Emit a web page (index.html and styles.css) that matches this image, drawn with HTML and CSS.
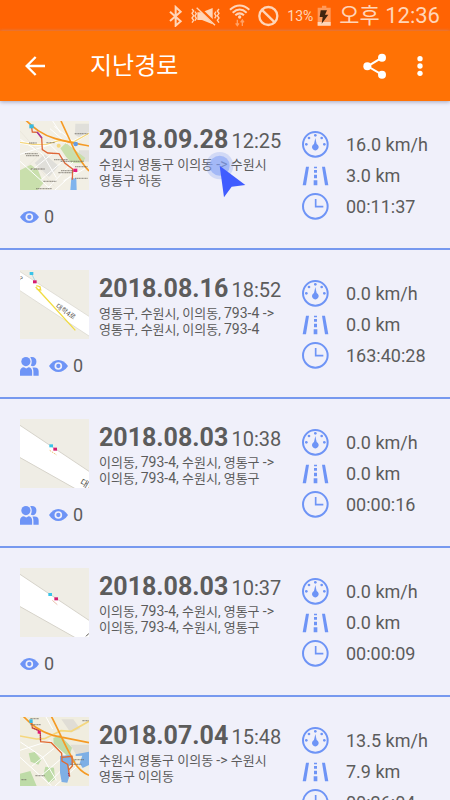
FILE: index.html
```html
<!DOCTYPE html>
<html lang="ko">
<head>
<meta charset="utf-8">
<meta name="viewport" content="width=device-width, initial-scale=1">
<title>지난경로</title>
<link rel="stylesheet" href="styles.css">
</head>
<body>
<svg class="sprite" aria-hidden="true">
  <symbol id="gauge" viewBox="0 0 81 81">
    <circle cx="40" cy="40" r="37" fill="none" stroke="currentColor" stroke-width="6"/>
    <path d="M40 21 L44 39 A10 10 0 1 1 36 39 Z" fill="currentColor"/>
    <g fill="currentColor"><circle cx="40" cy="13" r="4"/><circle cx="21" cy="21" r="4"/><circle cx="59" cy="21" r="4"/><circle cx="13" cy="40" r="4"/><circle cx="67" cy="40" r="4"/></g>
  </symbol>
  <symbol id="road" viewBox="0 0 81 60">
    <path d="M12 2h9L12 58H2zM60 2h9l10 56h-10zM36 2h9v5h-9zM36 12h9v8h-9zM36 26h9v11h-9zM35 43h11v15H35z" fill="currentColor"/>
  </symbol>
  <symbol id="clock" viewBox="0 0 81 81">
    <circle cx="40" cy="40" r="37" fill="none" stroke="currentColor" stroke-width="6"/>
    <path d="M41 18V41H64" fill="none" stroke="currentColor" stroke-width="5"/>
  </symbol>
  <symbol id="eye" viewBox="0 0 57 36">
    <path d="M0 18C8 6 17 0 28 0s21 6 29 18C49 30 39 36 28 36S8 30 0 18z" fill="currentColor"/>
    <circle cx="28" cy="18" r="9" fill="none" stroke="#f0f0fa" stroke-width="5"/>
  </symbol>
  <symbol id="people" viewBox="0 0 58 58">
    <g fill="currentColor">
      <path d="M31 1c12-3 20 4 19 14 0 8-5 13-11 13-2 0-4-1-6-2 4-8 4-18-2-25zM38 32h7c8 0 12 4 12 12v13H41V45c0-5-1-9-3-13z"/>
      <circle cx="18" cy="14" r="14"/>
      <path d="M0 57V44c0-8 5-13 12-13l7 4 7-4c7 0 11 5 11 13v13z"/>
    </g>
  </symbol>
  <symbol id="map-street" viewBox="0 0 207 207">
    <path fill="#efede5" d="M0 0h207v207H0z"/>
    <path d="M-3 17L210 159V234L-3 114z" fill="#fff" stroke="#d6d3ca" stroke-width="3"/>
  </symbol>
  <symbol id="map-city" viewBox="0 0 207 207">
    <path fill="#f2efe5" d="M0 0h207v207H0z"/>
    <path fill="#e0dfda" d="M166 8h41v34l-22 12-20-13zM44 126l30-26 42 35-29 33zM176 88h31v34h-25z"/>
    <path fill="#c9dfac" d="M121 82l17-16 58 45-9 16-33-2-16-18zM0 148l32-17 22 16 16 40-17 20H0z"/>
    <path d="M-3 101L90 71l83 82M1 55l67 45 41 70M35 148l67-54M64 176l70-60M83 202l76-79M105 207l70-63M0 121l95 86M90 23l51 45M103 16l60 48M130 180l76-44M98 0l24 36" fill="none" stroke="#fff" stroke-width="3"/>
    <path d="M0 30l78 88M18 140l39-39M49 132l54 64M142 70l55 73" fill="none" stroke="#ddd9cc" stroke-width="1"/>
    <path d="M0 64l40 6 39 0 38-11 43 4 47-26" fill="none" stroke="#fff" stroke-width="8"/>
    <path d="M0 64l40 6 39 0 38-11 43 4 47-26" fill="none" stroke="#f5d77d" stroke-width="4"/>
    <path d="M18-2C42 21 65 41 106 53c40 11 70 16 101 22M123 0c11 24 24 51 38 82 15 28 30 52 46 68" fill="none" stroke="#f59a24" stroke-width="5"/>
  </symbol>
</svg>

<div class="screen">
  <div class="status">
    <svg width="15" height="22" viewBox="63 12 45 66"><path d="M69 32l32 29-15 13V18l15 14-32 28" fill="none" stroke="currentColor" stroke-width="6"/></svg>
    <svg width="30" height="22" viewBox="130 12 90 66"><path d="M149 34h14l32-13v49l-32-13h-14z" fill="currentColor"/><path d="M149 16l56 55" stroke="#ff6303" stroke-width="10"/><path d="M147 20l55 53M133 24l5 6-5 7 5 7-5 7 5 7-5 7M142 32l4 6-4 7 4 7-4 7M214 24l-5 6 5 7-5 7 5 7-5 7 5 7M205 32l-4 6 4 7-4 7" fill="none" stroke="currentColor" stroke-width="4"/></svg>
    <svg width="21" height="23" viewBox="237 10 63 69"><path d="M240 27q29-25 58 0M248 36q21-19 42 0M256 44q13-12 26 0" fill="none" stroke="currentColor" stroke-width="6"/><circle cx="269" cy="49" r="5" fill="currentColor"/><path d="M262 57v18m-5-7l5 7 5-7M277 76V58m-5 7l5-7 5 7" fill="none" stroke="currentColor" stroke-width="4" opacity=".55"/></svg>
    <svg width="21" height="22" viewBox="328 13 63 66"><circle cx="359" cy="46" r="27" fill="none" stroke="currentColor" stroke-width="7"/><path d="M339 27l40 39" stroke="currentColor" stroke-width="7"/></svg>
    <span class="charge">13%</span>
    <svg width="14" height="21" viewBox="503 14 42 63"><path d="M518 16h13v6h13v54h-39V22h13z" fill="#ff995a"/><path d="M505 65h39v11h-39z" fill="currentColor"/><path d="M514 30h19l-6 13h10l-20 27 3-20h-9z" fill="#41240e"/></svg>
    <span class="time">오후 12:36</span>
  </div>

  <header class="appbar">
    <button class="tool" aria-label="뒤로"><svg width="20" height="20" viewBox="0 0 60 60"><path d="M32 3L5 30l27 27M5 30h55" fill="none" stroke="currentColor" stroke-width="7"/></svg></button>
    <h1>지난경로</h1>
    <button class="tool" aria-label="공유"><svg width="24" height="26" viewBox="0 0 72 78"><path d="M57 14L14 40l43 25" fill="none" stroke="currentColor" stroke-width="6"/><g fill="currentColor"><circle cx="57" cy="14" r="12"/><circle cx="13" cy="40" r="12"/><circle cx="57" cy="65" r="12"/></g></svg></button>
    <button class="tool more" aria-label="더보기"><svg width="6" height="22" viewBox="0 0 18 66"><g fill="currentColor"><circle cx="9" cy="11" r="8"/><circle cx="9" cy="33" r="8"/><circle cx="9" cy="55" r="8"/></g></svg></button>
  </header>

  <main class="routes">
    <article class="route">
      <div class="info">
        <svg class="thumb" viewBox="0 0 207 207">
          <use href="#map-city"/>
          <path d="M154 170l15 3 1 34h-19z" fill="#80b4ed"/>
          <path d="M35 20l2 13 15 1 13 17 2 35 16 10 34 2 18 29 23 17-1 32" fill="none" stroke="#df6737" stroke-width="4"/>
          <path d="M51 33l15 18" stroke="#a133a0" stroke-width="4"/>
          <path class="labels" d="M27 66h23M79 65h26M164 38h39M15 98h38M18 104h39M102 116h42M122 121h69M32 144h42M123 149h38M165 137h38M115 155h42M165 172h38M70 181h39M48 203h48"/>
          <circle cx="116" cy="74" r="6" fill="#f5d77d"/><circle cx="167" cy="69" r="7" fill="#669be2"/>
          <path d="M28 10h13v12H28z" fill="#39bae1"/><path d="M160 143h12v10h-12z" fill="#e21b77"/>
        </svg>
        <div class="place">
          <h2>2018.09.28 <time>12:25</time></h2>
          <p>수원시 영통구 이의동 <span>-&gt;</span> 수원시<br>영통구 하동</p>
        </div>
        <div class="views"><svg class="eye"><use href="#eye"/></svg><span>0</span></div>
      </div>
      <ul class="stats">
        <li><svg class="dial"><use href="#gauge"/></svg>16.0 km/h</li>
        <li><svg class="lane"><use href="#road"/></svg>3.0 km</li>
        <li><svg class="dial"><use href="#clock"/></svg>00:11:37</li>
      </ul>
      <svg class="pointer" viewBox="0 0 120 138" aria-hidden="true"><circle cx="41" cy="41" r="41" fill="#6b8fe8" opacity=".23"/><circle cx="41" cy="41" r="30" fill="#84a2f6" opacity=".6"/><path d="M41 41l77 58-41 5-23 32z" fill="#405cff"/></svg>
    </article>

    <article class="route">
      <div class="info">
        <svg class="thumb" viewBox="0 0 207 207">
          <path fill="#efede5" d="M0 0h207v207H0z"/>
          <path d="M-3 3l213 138v59L-3 60z" fill="#fff" stroke="#d6d3ca" stroke-width="2"/>
          <path d="M47 51l119 130M49 47l11 3 2 10-12-2" fill="none" stroke="#f1dc41" stroke-width="4"/>
          <path d="M35 12l10 20" stroke="#a9d9e4" stroke-width="3"/>
          <path d="M29 6h11v9H29z" fill="#39c4e8"/><path d="M39 31h11v9H39z" fill="#d51b70"/>
          <text class="road-name" transform="translate(106 112) rotate(34)">대학4로</text><text class="road-name" transform="translate(-6 29) rotate(34)">?</text>
        </svg>
        <div class="place">
          <h2>2018.08.16 <time>18:52</time></h2>
          <p>영통구, 수원시, 이의동, <span>793-4 -&gt;</span><br>영통구, 수원시, 이의동, <span>793-4</span></p>
        </div>
        <div class="views"><svg class="people"><use href="#people"/></svg><svg class="eye"><use href="#eye"/></svg><span>0</span></div>
      </div>
      <ul class="stats">
        <li><svg class="dial"><use href="#gauge"/></svg>0.0 km/h</li>
        <li><svg class="lane"><use href="#road"/></svg>0.0 km</li>
        <li><svg class="dial"><use href="#clock"/></svg>163:40:28</li>
      </ul>
    </article>

    <article class="route">
      <div class="info">
        <svg class="thumb" viewBox="0 0 207 207">
          <use href="#map-street"/>
          <path d="M93 83l13 12 5 13-15-5z" fill="#fff"/><path d="M89 94l21 14" stroke="#efc477" stroke-width="3" stroke-dasharray="5 3"/>
          <path d="M88 76h11v9H88z" fill="#39c4e8"/><path d="M100 86h11v9h-11z" fill="#d51b70"/>
          <text class="road-name large" transform="translate(178 195) rotate(30)">대학</text>
        </svg>
        <div class="place">
          <h2>2018.08.03 <time>10:38</time></h2>
          <p>이의동, <span>793-4,</span> 수원시, 영통구 <span>-&gt;</span><br>이의동, <span>793-4,</span> 수원시, 영통구</p>
        </div>
        <div class="views"><svg class="people"><use href="#people"/></svg><svg class="eye"><use href="#eye"/></svg><span>0</span></div>
      </div>
      <ul class="stats">
        <li><svg class="dial"><use href="#gauge"/></svg>0.0 km/h</li>
        <li><svg class="lane"><use href="#road"/></svg>0.0 km</li>
        <li><svg class="dial"><use href="#clock"/></svg>00:00:16</li>
      </ul>
    </article>

    <article class="route">
      <div class="info">
        <svg class="thumb" viewBox="0 0 207 207">
          <use href="#map-street"/>
          <path d="M96 88l14 8 3 15-16-10z" fill="#fff"/><path d="M97 97l15 13" stroke="#dfa184" stroke-width="2"/>
          <path d="M85 75h11v9H85z" fill="#39c4e8"/><path d="M103 88h11v9h-11z" fill="#d51b70"/>
          <path d="M198 205l9-9" stroke="#57534c" stroke-width="3"/>
        </svg>
        <div class="place">
          <h2>2018.08.03 <time>10:37</time></h2>
          <p>이의동, <span>793-4,</span> 수원시, 영통구 <span>-&gt;</span><br>이의동, <span>793-4,</span> 수원시, 영통구</p>
        </div>
        <div class="views"><svg class="eye"><use href="#eye"/></svg><span>0</span></div>
      </div>
      <ul class="stats">
        <li><svg class="dial"><use href="#gauge"/></svg>0.0 km/h</li>
        <li><svg class="lane"><use href="#road"/></svg>0.0 km</li>
        <li><svg class="dial"><use href="#clock"/></svg>00:00:09</li>
      </ul>
    </article>

    <article class="route">
      <div class="info">
        <svg class="thumb" viewBox="0 0 207 207">
          <path fill="#f0eddf" d="M0 0h207v207H0z"/>
          <path d="M124 7h36l21 29-30 10zM151 83h56v31h-38z" fill="#e0ddd5"/>
          <path d="M100 63l20-9 36 38-9 28-46-38zM26 109l18-4 20 23-9 15-23-9zM76 149l26 3 3 35-18 12-17-24zM0 170l31-8 19 45H0z" fill="#bedba7"/>
          <path d="M-3 101l93-30 83 82M1 75l67 45 41 70M35 148l67-54M64 176l70-60M83 202l76-79M105 207l70-63M0 121l95 86M78 0l20 36" fill="none" stroke="#fff" stroke-width="3"/>
          <path d="M120 117l28-3 19 19-20 15 2 27-7 22-17-2-5-28zM167 112l40-8v40l-19 9-9-14 8-23-20 1z" fill="#7eafe5"/>
          <path d="M0 57l49 9 25-1 49-24 31 2 53-30" fill="none" stroke="#f5d77d" stroke-width="5"/>
          <path d="M10-2c23 24 44 42 88 57l109 22M94-2c26 50 40 86 60 120 12 29 29 47 53 57" fill="none" stroke="#f59a24" stroke-width="5"/>
          <path d="M35 16l2 17 17 6 7 12 1 23 32 3 31 32 1 23 17 10 6 37M126 121l30-3 1 29-10 11" fill="none" stroke="#e16a31" stroke-width="4"/>
          <path d="M37 32l24 12v28M145 168l3 12" fill="none" stroke="#9b275f" stroke-width="3" stroke-dasharray="4 2"/>
          <path class="labels" d="M31 5h25M31 23h32M187 11h20M163 128h30M151 142h33M46 176h28M4 188h15"/>
          <path d="M28 7h10v11H28z" fill="#39bae1"/><path d="M53 41h9v9h-9z" fill="#e21b77"/>
        </svg>
        <div class="place">
          <h2>2018.07.04 <time>15:48</time></h2>
          <p>수원시 영통구 이의동 <span>-&gt;</span> 수원시<br>영통구 이의동</p>
        </div>
        <div class="views"><svg class="eye"><use href="#eye"/></svg><span>0</span></div>
      </div>
      <ul class="stats">
        <li><svg class="dial"><use href="#gauge"/></svg>13.5 km/h</li>
        <li><svg class="lane"><use href="#road"/></svg>7.9 km</li>
        <li><svg class="dial"><use href="#clock"/></svg>00:26:04</li>
      </ul>
    </article>
  </main>
</div>
</body>
</html>
```

FILE: styles.css
```css
* {
  box-sizing: border-box;
}

body,
h1,
h2,
p,
ul {
  margin: 0;
  padding: 0;
}

body {
  background: #f0f0fa;
  color: #5c5c5c;
  font-family: Roboto, "Noto Sans CJK KR", sans-serif;
}

svg {
  display: block;
  flex: none;
}

.sprite {
  position: absolute;
  width: 0;
  height: 0;
}

.screen {
  display: flex;
  flex-direction: column;
  height: 100vh;
}

.status {
  display: flex;
  flex: none;
  align-items: center;
  justify-content: flex-end;
  gap: 8px;
  height: 31px;
  padding-right: 10px;
  background: #ff6303;
  color: #ffd5b8;
}

.charge {
  font-size: 14px;
  margin-right: -4px;
}

.time {
  font-size: 22px;
  line-height: 31px;
}

.appbar {
  position: relative;
  z-index: 1;
  display: flex;
  flex: none;
  align-items: center;
  height: 70px;
  padding: 0 16px;
  background: #ff7205;
  color: #fff;
  box-shadow: 0 1px 4px #a4a4bc;
}

.appbar h1 {
  flex: 1;
  margin-left: 36px;
  font-size: 24px;
  font-weight: 400;
  line-height: 36px;
}

.tool {
  display: grid;
  place-items: center;
  width: 38px;
  height: 40px;
  padding: 0;
  border: 0;
  background: none;
  color: inherit;
}

.more {
  width: 28px;
  margin-left: 12px;
}

.routes {
  flex: 1;
  min-height: 0;
  overflow-y: auto;
  scrollbar-width: none;
}

.route {
  position: relative;
  display: flex;
  height: 149px;
  padding: 20px 0 0 20px;
  border-bottom: 2px solid #7799ef;
}

.info {
  display: grid;
  flex: 1;
  grid-template-columns: 69px 1fr;
  grid-template-rows: 69px 28px;
  gap: 13px 10px;
  min-width: 0;
}

.thumb {
  width: 69px;
  height: 69px;
}

.labels {
  stroke: #6b665e;
  stroke-width: 4px;
  stroke-dasharray: 5 1 3 1;
  opacity: 0.6;
}

.road-name {
  fill: #55524c;
  font-size: 20px;
}

.large {
  font-size: 27px;
}

.place {
  padding-top: 4px;
  white-space: nowrap;
}

.place h2 {
  font-size: 25px;
  font-weight: 700;
  line-height: 30px;
}

.place time {
  margin-left: -3px;
  font-size: 20px;
  font-weight: 400;
}

.place p {
  margin-top: 1px;
  font-size: 13px;
  line-height: 16px;
}

.place p span {
  font-size: 14px;
  line-height: 1;
}

.views {
  display: flex;
  grid-column: 1 / -1;
  align-items: center;
  font-size: 18px;
  line-height: 28px;
}

.views span {
  margin-left: 5px;
}

.eye,
.people,
.dial,
.lane {
  color: #6e94f6;
}

.eye {
  width: 19px;
  height: 12px;
}

.people {
  width: 19px;
  height: 19px;
  margin-right: 10px;
}

.stats {
  flex: none;
  width: 148px;
  padding-top: 8px;
  list-style: none;
  font-size: 18px;
  line-height: 31px;
}

.stats li {
  display: flex;
  align-items: center;
  gap: 17px;
  height: 31px;
}

.dial {
  width: 27px;
  height: 27px;
}

.lane {
  width: 27px;
  height: 20px;
}

.pointer {
  position: absolute;
  top: 51px;
  left: 206px;
  width: 40px;
  height: 46px;
}
```
